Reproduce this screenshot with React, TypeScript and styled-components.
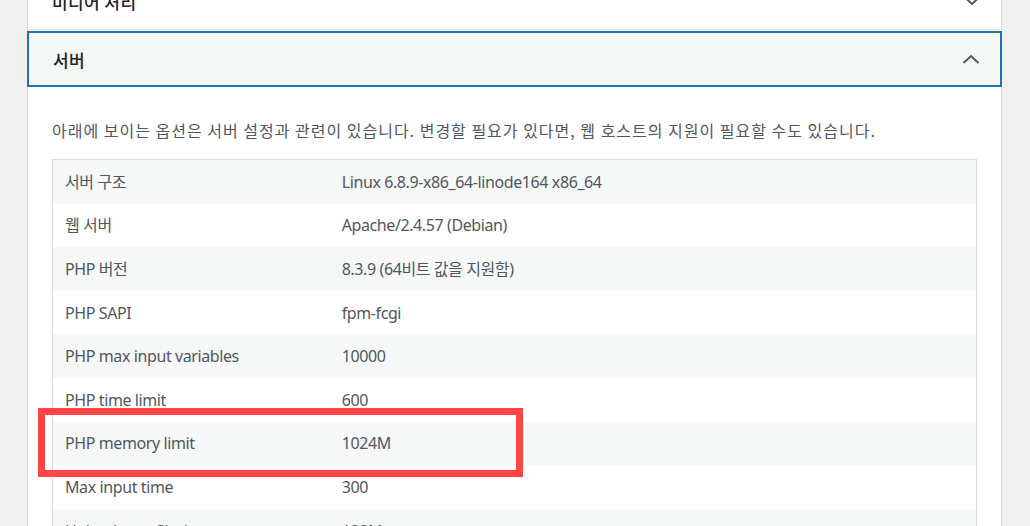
import React from "react";
import styled, { createGlobalStyle } from "styled-components";

const Global = createGlobalStyle`
  html, body { margin: 0; padding: 0; background: #f0f0f1; }
  body {
    font-family: "Noto Sans", "Noto Sans CJK KR", sans-serif;
    overflow: hidden;
  }
`;

const Page = styled.div`
  width: 1030px;
  height: 526px;
  overflow: hidden;
  background: #f0f0f1;
  padding: 0 28px 0 27px;
  box-sizing: border-box;
`;

const Panel = styled.div`
  margin-top: -27px;
  background: #fff;
  border-left: 1px solid #dcdcde;
  border-right: 1px solid #dcdcde;
  box-sizing: border-box;
`;

const Heading = styled.button<{ $open?: boolean }>`
  display: flex;
  align-items: center;
  justify-content: space-between;
  height: ${(p) => (p.$open ? "56px" : "57px")};
  margin: ${(p) => (p.$open ? "1px 0 0 -1px" : "0")};
  width: ${(p) => (p.$open ? "calc(100% + 2px)" : "100%")};
  padding: 0 20px 0 24px;
  box-sizing: border-box;
  font-family: "Noto Sans CJK KR", "Noto Sans", sans-serif;
  font-size: 17px;
  font-weight: 500;
  letter-spacing: 0.4px;
  color: #1d2327;
  text-align: left;
  cursor: pointer;
  background: ${(p) => (p.$open ? "#f6f7f7" : "#fff")};
  border: ${(p) => (p.$open ? "2px solid #2271b1" : "none")};
  border-bottom: ${(p) => (p.$open ? "2px solid #2271b1" : "1px solid #dcdcde")};
`;

const Chevron = ({ up }: { up?: boolean }) => (
  <svg width="18" height="10" viewBox="0 0 18 10" aria-hidden>
    <path
      d={up ? "M1.5 9 L9 2 L16.5 9" : "M1.5 1 L9 8 L16.5 1"}
      fill="none"
      stroke="#50575e"
      strokeWidth="2"
    />
  </svg>
);

const Body = styled.div`
  padding: 30px 24px 0 24px;
`;

const Intro = styled.p`
  margin: 0 0 16px 0;
  font-family: "Noto Sans CJK KR", "Noto Sans", sans-serif;
  font-size: 16px;
  line-height: 26px;
  letter-spacing: 1px;
  color: #50575e;
  white-space: nowrap;
`;

const TableWrap = styled.div`
  position: relative;
`;

const Table = styled.table`
  width: 100%;
  border-collapse: collapse;
  border: 1px solid #dcdcde;
  table-layout: fixed;
`;

const Row = styled.tr<{ $shade: boolean }>`
  background: ${(p) => (p.$shade ? "#f6f7f7" : "#fff")};
`;

const Cell = styled.td<{ $label?: boolean }>`
  box-sizing: border-box;
  width: ${(p) => (p.$label ? "30%" : "auto")};
  padding: 9.8px 12px;
  font-size: 16px;
  line-height: 24px;
  letter-spacing: -0.4px;
  color: #50575e;
  font-family: "Noto Sans", "Noto Sans CJK KR", sans-serif;
  white-space: nowrap;
`;

const Highlight = styled.div`
  position: absolute;
  left: -14px;
  top: 249px;
  width: 485px;
  height: 69px;
  border: 7px solid #ff4545;
  box-sizing: border-box;
  pointer-events: none;
`;

const rows: [string, string][] = [
  ["서버 구조", "Linux 6.8.9-x86_64-linode164 x86_64"],
  ["웹 서버", "Apache/2.4.57 (Debian)"],
  ["PHP 버전", "8.3.9 (64비트 값을 지원함)"],
  ["PHP SAPI", "fpm-fcgi"],
  ["PHP max input variables", "10000"],
  ["PHP time limit", "600"],
  ["PHP memory limit", "1024M"],
  ["Max input time", "300"],
  ["Upload max filesize", "128M"],
  ["PHP post max size", "128M"],
];

export default function App() {
  return (
    <Page>
      <Global />
      <Panel>
        <Heading type="button">
          <span>미디어 처리</span>
          <Chevron />
        </Heading>
        <Heading type="button" $open>
          <span>서버</span>
          <Chevron up />
        </Heading>
        <Body>
          <Intro>
            아래에 보이는 옵션은 서버 설정과 관련이 있습니다. 변경할 필요가 있다면, 웹 호스트의 지원이 필요할 수도 있습니다.
          </Intro>
          <TableWrap>
            <Table>
              <tbody>
                {rows.map(([k, v], i) => (
                  <Row key={k} $shade={i % 2 === 0}>
                    <Cell $label>{k}</Cell>
                    <Cell>{v}</Cell>
                  </Row>
                ))}
              </tbody>
            </Table>
            <Highlight />
          </TableWrap>
        </Body>
      </Panel>
    </Page>
  );
}
